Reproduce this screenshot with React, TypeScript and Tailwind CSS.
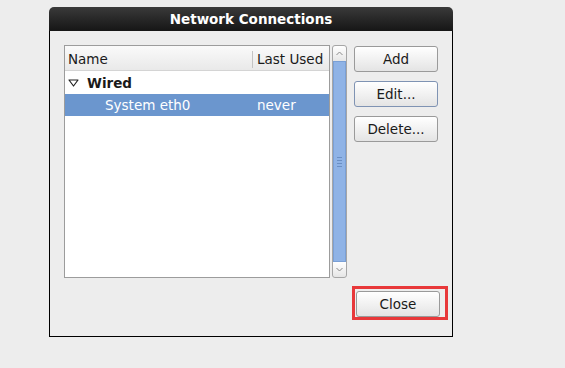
import React from 'react';

const font = { fontFamily: '"DejaVu Sans", Verdana, sans-serif' };

const GtkButton: React.FC<{ label: string; focused?: boolean; className?: string }> = ({ label, focused, className }) => (
    <button
        className={`h-[26px] w-[84px] rounded-[3px] border text-[13.5px] text-[#1a1a1a] bg-gradient-to-b from-white to-[#e4e4e4] ${focused ? 'border-[#7f93b3]' : 'border-[#9a9a9a]'} ${className ?? ''}`}
    >
        {label}
    </button>
);

const Scrollbar: React.FC = () => (
    <div className="flex h-[233px] w-[15px] flex-col rounded-[3px] border border-[#a6a6a6] bg-[#dcdcdc]">
        {/* up stepper */}
        <div className="flex h-[15px] items-center justify-center bg-gradient-to-b from-white to-[#e6e6e6] rounded-t-[3px]">
            <svg width="7" height="5" viewBox="0 0 7 5">
                <path d="M0.5 4 L3.5 1 L6.5 4" fill="none" stroke="#8a8a8a" strokeWidth="1" />
            </svg>
        </div>
        {/* slider */}
        <div className="flex flex-1 items-center justify-center border border-[#7aa0d6] bg-[#8fb3e6]">
            <div className="flex flex-col gap-[2px]">
                <div className="h-px w-[5px] bg-[#6a8fc4]" />
                <div className="h-px w-[5px] bg-[#6a8fc4]" />
                <div className="h-px w-[5px] bg-[#6a8fc4]" />
                <div className="h-px w-[5px] bg-[#6a8fc4]" />
            </div>
        </div>
        {/* down stepper */}
        <div className="flex h-[15px] items-center justify-center bg-gradient-to-b from-white to-[#e6e6e6] rounded-b-[3px]">
            <svg width="7" height="5" viewBox="0 0 7 5">
                <path d="M0.5 1 L3.5 4 L6.5 1" fill="none" stroke="#8a8a8a" strokeWidth="1" />
            </svg>
        </div>
    </div>
);

const ConnectionList: React.FC = () => (
    <div className="flex h-[233px] w-[266px] flex-col border border-[#9c9c9c] bg-white">
        {/* header */}
        <div className="flex h-[25px] items-center border-b border-[#d4d4d4] bg-gradient-to-b from-[#fafafa] to-[#e9e9e9] pt-[2px] text-[13.5px] text-[#1a1a1a]">
            <div className="w-[187px] pl-[3px]">Name</div>
            <div className="h-[17px] w-px bg-[#c4c4c4]" />
            <div className="pl-[4px]">Last Used</div>
        </div>
        {/* wired group */}
        <div className="flex h-[23px] items-center pt-[1px] text-[13.5px] font-bold text-[#1a1a1a]">
            <svg width="11" height="8" viewBox="0 0 11 8" className="ml-[3px]">
                <path d="M1 1 L10 1 L5.5 7 Z" fill="none" stroke="#222" strokeWidth="1.2" strokeLinejoin="round" />
            </svg>
            <span className="ml-[8px]">Wired</span>
        </div>
        {/* selected row */}
        <div className="flex h-[22px] items-center bg-[#6b96ce] pt-[1px] text-[13.5px] text-white">
            <div className="w-[188px] pl-[40px]">System eth0</div>
            <div className="pl-[4px]">never</div>
        </div>
    </div>
);

const App: React.FC = () => {
    return (
        <div className="h-[368px] w-[565px] overflow-hidden bg-[#ededed] pl-[49px] pt-[7px]" style={font}>
            <div className="flex h-[330px] w-[404px] flex-col">
                {/* title bar */}
                <div className="flex h-[24px] items-center justify-center rounded-t-[5px] bg-gradient-to-b from-[#3a3a3a] to-[#161616] text-[13.5px] font-bold text-white">
                    Network Connections
                </div>
                {/* body */}
                <div className="flex flex-1 flex-col border-x border-b border-black bg-[#ededed] pl-[14px] pt-[14px]">
                    <div className="flex">
                        <ConnectionList />
                        <div className="ml-[2px]">
                            <Scrollbar />
                        </div>
                        <div className="ml-[7px] mt-px flex flex-col gap-[9px]">
                            <GtkButton label="Add" />
                            <GtkButton label="Edit..." focused />
                            <GtkButton label="Delete..." />
                        </div>
                    </div>
                    <div className="ml-[288px] mt-[8px]">
                        <div className="relative h-[34px] w-[96px]">
                            <GtkButton label="Close" className="absolute left-[4px] top-[5px]" />
                            <div className="pointer-events-none absolute inset-0 border-[3px] border-[#e8383a]" />
                        </div>
                    </div>
                </div>
            </div>
        </div>
    );
};

export default App;
